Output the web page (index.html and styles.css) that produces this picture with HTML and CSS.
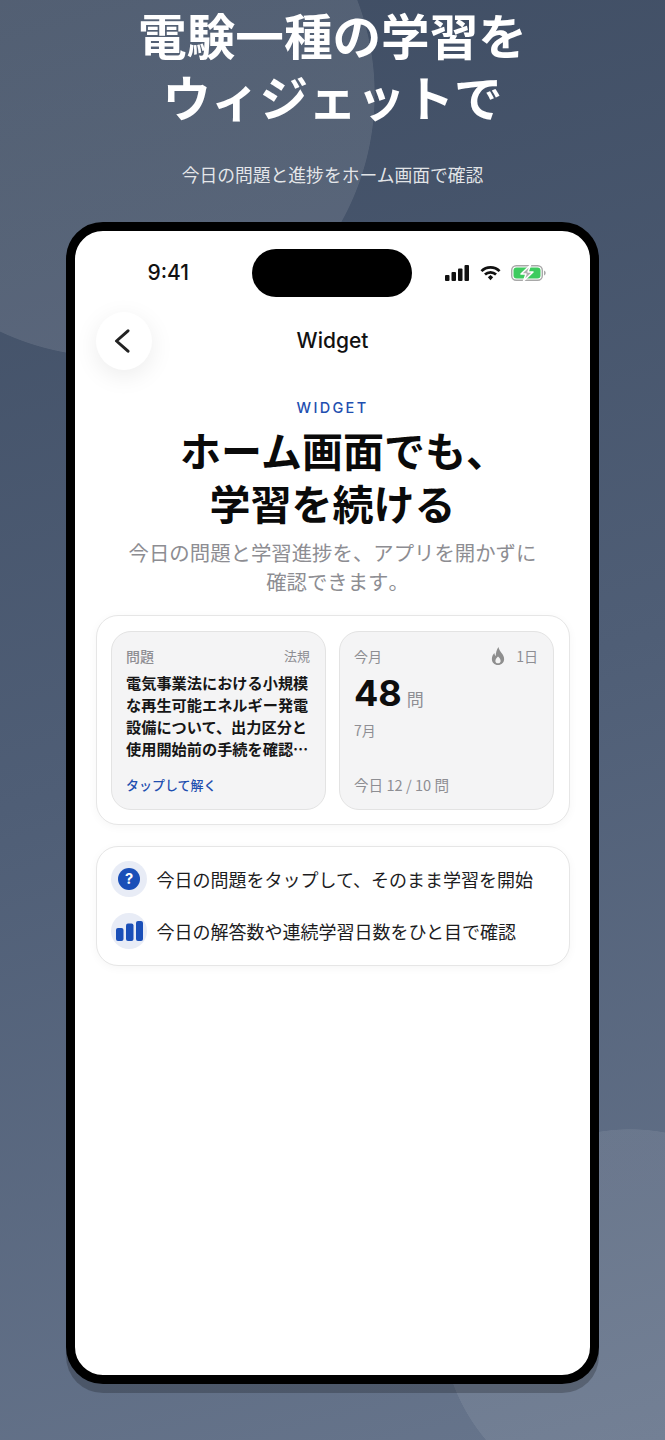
FILE: index.html
```html
<!DOCTYPE html>
<html lang="ja">

<head>
    <meta charset="UTF-8">
    <meta name="viewport" content="width=device-width, initial-scale=1.0">
    <title>Widget</title>
    <link rel="stylesheet" href="styles.css">
</head>

<body>
    <div class="page">
        <h1>電験一種の学習を<br>ウィジェットで</h1>
        <p class="lead">今日の問題と進捗をホーム画面で確認</p>

        <div class="phone">
            <div class="island"></div>
            <div class="status">
                <span class="time">9:41</span>
                <div class="status-icons">
                    <svg width="25" height="16" viewBox="0 0 25 16">
                        <rect x="0" y="10" width="4.5" height="6" rx="1" fill="#111" />
                        <rect x="6.5" y="7" width="4.5" height="9" rx="1" fill="#111" />
                        <rect x="13" y="3.5" width="4.5" height="12.5" rx="1" fill="#111" />
                        <rect x="19.5" y="0" width="4.5" height="16" rx="1" fill="#111" />
                    </svg>
                    <svg width="21" height="16" viewBox="0 0 22 16">
                        <path d="M1.5 6a13.5 13.5 0 0 1 19 0" fill="none" stroke="#111" stroke-width="2.8" />
                        <path d="M5.2 9.6a8.4 8.4 0 0 1 11.6 0" fill="none" stroke="#111" stroke-width="2.8" />
                        <path d="M8.2 12.4l2.8-2.2 2.8 2.2L11 15.6z" fill="#111" />
                    </svg>
                    <svg width="35" height="16" viewBox="0 0 35 16">
                        <rect x="0.7" y="0.7" width="30.600" height="14.600" rx="4.5" fill="#fff" stroke="#a8a8a8" stroke-width="1.4" />
                        <rect x="2.5" y="2.5" width="27" height="11" rx="3" fill="#3ecb5f" />
                        <path d="M33 5.500c1.100.4 1.700 1.300 1.700 2.500s-.6 2.100-1.700 2.500z" fill="#a8a8a8" />
                        <path d="M19.500 0L10 9h5l-2.500 7L22 7h-5z" fill="#b0b0b0" stroke="#fff" stroke-width="1.5" stroke-linejoin="round" />
                    </svg>
                </div>
            </div>

            <div class="nav">
                <button class="back">
                    <svg width="18" height="24" viewBox="0 0 18 24">
                        <path d="M15 1.800L3.500 12 15 22.200" fill="none" stroke="#222" stroke-width="3" stroke-linecap="round" stroke-linejoin="round" />
                    </svg>
                </button>
                <span class="nav-title">Widget</span>
            </div>

            <div class="intro">
                <div class="eyebrow">WIDGET</div>
                <h2>ホーム画面でも<span class="punct">、</span><br>学習を続ける</h2>
                <p>今日の問題と学習進捗を、アプリを開かずに<br>確認できます<span class="punct">。</span></p>
            </div>

            <div class="card widgets">
                <div class="widget">
                    <div class="widget-head">
                        <span>問題</span>
                        <span class="tag">法規</span>
                    </div>
                    <div class="question">電気事業法における小規模<br>な再生可能エネルギー発電<br>設備について、出力区分と<br>使用開始前の手続を確認…</div>
                    <div class="tap">タップして解く</div>
                </div>
                <div class="widget">
                    <div class="widget-head month-head">
                        <span>今月</span>
                        <span class="streak">
                            <svg width="14" height="18" viewBox="0 0 16 18" preserveAspectRatio="none">
                                <path d="M8.500 0c.6 2.800 2 4 3.800 6.200C13.800 8 15 9.800 15 12c0 3.500-3 6-7 6s-7-2.500-7-6c0-2.600 1.300-4.600 2.900-6 .1 1.400.6 2.400 1.500 3C5.500 5.500 6.500 2.500 8.500 0z" fill="#8e8e8e" />
                                <path d="M8 9.500c1.700 1.500 3 2.700 3 4.400 0 1.500-1.300 2.400-3 2.400s-3-.9-3-2.400c0-1.700 1.500-2.900 3-4.400z" fill="#f3f3f3" />
                            </svg>
                            1日
                        </span>
                    </div>
                    <div class="count"><strong>48</strong><span>問</span></div>
                    <div class="month">7月</div>
                    <div class="today">今日 12 / 10 問</div>
                </div>
            </div>

            <div class="card points">
                <div class="point">
                    <span class="point-icon">
                        <svg width="22" height="22" viewBox="0 0 24 24">
                            <circle cx="12" cy="12" r="12" fill="#1a4fb8" />
                            <text x="12" y="17.500" class="q-mark">?</text>
                        </svg>
                    </span>
                    今日の問題をタップして、そのまま学習を開始
                </div>
                <div class="point">
                    <span class="point-icon">
                        <svg width="27" height="20" viewBox="0 0 27 20">
                            <rect x="0" y="7" width="7.500" height="13" rx="2" fill="#1a4fb8" />
                            <rect x="10" y="2.500" width="7.500" height="17.500" rx="2" fill="#1a4fb8" />
                            <rect x="20" y="0" width="7" height="20" rx="2" fill="#1a4fb8" />
                        </svg>
                    </span>
                    今日の解答数や連続学習日数をひと目で確認
                </div>
            </div>
        </div>
    </div>
</body>

</html>
```
FILE: styles.css
```css
* {
    box-sizing: border-box;
}

html,
body {
    margin: 0;
    padding: 0;
}

body {
    width: 665px;
    height: 1440px;
    overflow: hidden;
    font-family: "Noto Sans CJK JP", "Noto Sans", sans-serif;
    background:
        radial-gradient(circle 263px at 112px 94px, rgba(255, 255, 255, 0.1) 99.7%, transparent 100%),
        radial-gradient(circle 189px at 630px 1318px, rgba(255, 255, 255, 0.08) 99.7%, transparent 100%),
        linear-gradient(165deg, #3f4d63 0%, #4f5e76 50%, #67758c 100%);
}

.page {
    display: flex;
    flex-direction: column;
    align-items: center;
}

h1 {
    margin: 3px 0 0;
    color: #fff;
    font-size: 48.6px;
    line-height: 62px;
    font-weight: 700;
    text-align: center;
}

.lead {
    margin: 34px 0 0;
    color: rgba(255, 255, 255, 0.85);
    font-size: 17.8px;
    line-height: 26px;
}

.phone {
    position: relative;
    margin-top: 34.5px;
    width: 533px;
    height: 1162px;
    padding: 0 20.5px;
    background-color: #fff;
    border: 9.5px solid #000;
    border-radius: 37px;
    box-shadow: 0 9px 0 rgba(0, 0, 0, 0.22);
}

.island {
    position: absolute;
    left: 177px;
    top: 18px;
    width: 160px;
    height: 48px;
    background-color: #000;
    border-radius: 24px;
}

.status {
    display: flex;
    justify-content: space-between;
    align-items: center;
    height: 84.5px;
    padding: 0 24px 0 52px;
}

.time {
    font-family: Inter, sans-serif;
    font-size: 21px;
    font-weight: 500;
    color: #111;
}

.status-icons {
    display: flex;
    align-items: center;
    gap: 10px;
}

.nav {
    position: relative;
    display: flex;
    justify-content: center;
    align-items: center;
    height: 56px;
}

.nav-title {
    margin-top: -5px;
    font-family: Inter, sans-serif;
    font-size: 21px;
    font-weight: 500;
    color: #111;
}

.back {
    position: absolute;
    left: 0;
    top: -3.5px;
    display: flex;
    align-items: center;
    justify-content: center;
    width: 56px;
    height: 58px;
    padding: 0 4px 0 0;
    background-color: #fff;
    border: none;
    border-radius: 50%;
    box-shadow: 0 6px 24px rgba(0, 0, 0, 0.08);
}

.intro {
    margin-top: 26.5px;
    text-align: center;
}

.eyebrow {
    font-family: Inter, sans-serif;
    font-size: 14.5px;
    line-height: 20px;
    font-weight: 500;
    letter-spacing: 2.3px;
    color: #1f4fb0;
}

.intro h2 {
    margin: 5.5px 0 0;
    font-size: 41px;
    line-height: 53px;
    font-weight: 700;
    color: #0a0a0a;
}

.intro h2 .punct {
    letter-spacing: -22px;
}

.intro p {
    margin: 8.5px 0 0;
    font-size: 20.4px;
    line-height: 29px;
    color: #8d8d92;
}

.intro p .punct {
    letter-spacing: -10px;
}

.card {
    background-color: #fff;
    border: 1px solid #e6e6e6;
    border-radius: 22px;
    box-shadow: 0 2px 10px rgba(0, 0, 0, 0.04);
}

.widgets {
    display: flex;
    gap: 13px;
    margin-top: 19.5px;
    height: 210px;
    padding: 14.5px;
}

.widget {
    display: flex;
    flex-direction: column;
    flex: 1;
    min-width: 0;
    padding: 13px 15px 14px 14px;
    background-color: #f4f4f5;
    border: 1px solid #e3e3e3;
    border-radius: 20px;
}

.widget-head {
    display: flex;
    justify-content: space-between;
    align-items: center;
    font-size: 14px;
    line-height: 22px;
    font-weight: 500;
    color: #8e8e93;
}

.tag {
    font-size: 13px;
    font-weight: 400;
}

.question {
    margin-top: 4px;
    font-size: 15.2px;
    line-height: 22px;
    font-weight: 700;
    color: #161616;
    white-space: nowrap;
}

.tap {
    margin-top: auto;
    font-size: 13px;
    line-height: 20px;
    font-weight: 500;
    color: #1f4fb0;
}

.month-head {
    font-weight: 400;
}

.streak {
    display: flex;
    align-items: center;
    gap: 11px;
}

.count {
    display: flex;
    align-items: baseline;
    margin-top: 3px;
    line-height: 46px;
    color: #0d0d0d;
}

.count strong {
    font-family: Inter, sans-serif;
    font-size: 36px;
    font-weight: 700;
}

.count span {
    margin-left: 5px;
    font-size: 17px;
    color: #8e8e93;
}

.month {
    margin-top: -3px;
    font-size: 14px;
    line-height: 22px;
    color: #8e8e93;
}

.today {
    margin-top: auto;
    font-size: 14.6px;
    line-height: 20px;
    color: #8e8e93;
}

.points {
    display: flex;
    flex-direction: column;
    gap: 16px;
    margin-top: 21px;
    height: 120px;
    padding: 14px 14.5px;
}

.point {
    display: flex;
    align-items: center;
    gap: 9.5px;
    font-size: 18px;
    line-height: 36px;
    color: #1c1c1e;
    white-space: nowrap;
}

.point-icon {
    display: flex;
    align-items: center;
    justify-content: center;
    flex: none;
    width: 36px;
    height: 36px;
    background-color: #e8ecf6;
    border-radius: 50%;
}

.q-mark {
    font-family: Inter, sans-serif;
    font-size: 16px;
    font-weight: 700;
    fill: #fff;
    text-anchor: middle;
}
```
